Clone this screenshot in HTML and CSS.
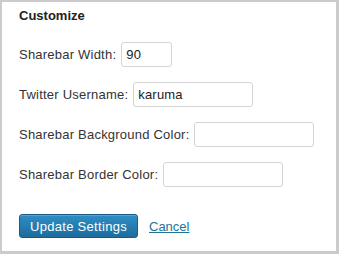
FILE: index.html
```html
<!DOCTYPE html>
<html>
<head>
<meta charset="utf-8">
<title>Customize</title>
<link rel="stylesheet" href="styles.css">
</head>
<body>
<div class="frame">
	<h3 class="hd">Customize</h3>
	<div class="row">
		<label class="lbl">Sharebar Width:</label>
		<input class="ipt ipt-sm" type="text" value="90">
	</div>
	<div class="row">
		<label class="lbl">Twitter Username:</label>
		<input class="ipt" type="text" value="karuma">
	</div>
	<div class="row">
		<label class="lbl">Sharebar Background Color:</label>
		<input class="ipt" type="text" value="">
	</div>
	<div class="row">
		<label class="lbl">Sharebar Border Color:</label>
		<input class="ipt" type="text" value="">
	</div>
	<div class="btns">
		<button class="btn" type="button">Update Settings</button>
		<a class="cancel" href="#">Cancel</a>
	</div>
</div>
</body>
</html>
```

FILE: styles.css
```css
*,*:before,*:after{
	padding: 0;
	margin: 0;
	box-sizing: border-box;
}
body{
	font-family: "Liberation Sans", Arial, sans-serif;
	font-size: 13px;
	color: #333;
	background: #fff;
}
.frame{
	width: 339px;
	height: 254px;
	border-style: solid;
	border-color: #cbcbcb;
	border-width: 2px 3px 3px 2px;
	padding: 6px 0 0 17px;
}
.hd{
	font-size: 13px;
	font-weight: bold;
	line-height: 16px;
	color: #222;
	margin-bottom: 18px;
}
.row{
	display: flex;
	align-items: center;
	height: 25px;
	margin-bottom: 15px;
}
.lbl{
	margin-right: 5px;
	white-space: nowrap;
	letter-spacing: 0.22px;
}
.ipt{
	width: 120px;
	height: 25px;
	border: 1px solid #d4d4d4;
	border-radius: 3px;
	padding: 0 4px;
	font-family: "Liberation Sans", Arial, sans-serif;
	font-size: 13px;
	letter-spacing: 0.2px;
	color: #222;
	outline: none;
}
.ipt-sm{
	width: 51px;
}
.btns{
	display: flex;
	align-items: center;
	margin-top: 27px;
}
.btn{
	height: 24px;
	width: 119px;
	border: 1px solid #1b5a87;
	border-radius: 3px;
	background: linear-gradient(to bottom, #2e8ec4, #1f6c9e);
	color: #fff;
	font-family: "Liberation Sans", Arial, sans-serif;
	font-size: 13px;
	letter-spacing: 0.3px;
	box-shadow: inset 0 1px 0 rgba(255,255,255,0.2);
}
.cancel{
	margin-left: 11px;
	color: #21759b;
	text-decoration: underline;
}
```
